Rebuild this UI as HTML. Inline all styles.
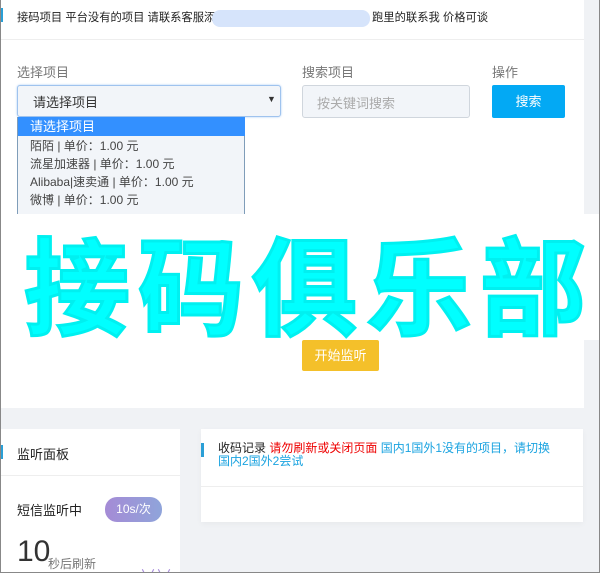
<!DOCTYPE html><html><head><meta charset="utf-8"><style>
*{margin:0;padding:0;box-sizing:border-box}
html,body{width:600px;height:573px;overflow:hidden}
body{background:#f0f2f5;font-family:"Liberation Sans","Noto Sans CJK SC",sans-serif;position:relative}
.a{position:absolute;white-space:nowrap}
.frame{position:absolute;left:0;top:0;width:600px;height:573px;border:1px solid #888;border-top:none;pointer-events:none;z-index:50}
</style></head><body>
<div class="a" style="left:0;top:0;width:584px;height:408px;background:#fff"></div>
<div class="a" style="left:0;top:8px;width:3px;height:14px;background:#2a9fd6"></div>
<div class="a" style="left:17px;top:9px;font-size:11.3px;color:#222">接码项目 平台没有的项目 请联系客服添加</div>
<div class="a" style="left:212px;top:10px;width:158px;height:17px;border-radius:8px;background:#d6e4fb"></div>
<div class="a" style="left:372px;top:9px;font-size:11.3px;color:#222">跑里的联系我 价格可谈</div>
<div class="a" style="left:0;top:39px;width:584px;height:1px;background:#eee"></div>
<div class="a" style="left:17px;top:62px;font-size:13px;color:#777">选择项目</div>
<div class="a" style="left:302px;top:62px;font-size:13px;color:#777">搜索项目</div>
<div class="a" style="left:492px;top:62px;font-size:13px;color:#777">操作</div>
<div class="a" style="left:17px;top:85px;width:264px;height:32px;background:#f2f5f9;border:1px solid #9fc3ee;border-radius:3px;box-shadow:0 0 2px #a9ccf5"></div>
<div class="a" style="left:33px;top:92px;font-size:13px;color:#333">请选择项目</div>
<div class="a" style="left:267px;top:94px;font-size:9px;color:#333">▼</div>
<div class="a" style="left:302px;top:85px;width:168px;height:33px;background:#f2f5f9;border:1px solid #d0d6dd;border-radius:3px"></div>
<div class="a" style="left:317px;top:93px;font-size:13px;color:#aaa">按关键词搜索</div>
<div class="a" style="left:492px;top:85px;width:73px;height:33px;background:#03a9f4;border-radius:2px;color:#fff;font-size:13px;text-align:center;line-height:33px">搜索</div>
<div class="a" style="left:17px;top:117px;width:228px;height:100px;background:#f2f5f9;border:1px solid #7f9db9;border-top:none"></div>
<div class="a" style="left:18px;top:117px;width:227px;height:19px;background:#3390ff"></div>
<div class="a" style="left:30px;top:118px;font-size:13px;color:#fff;line-height:18px">请选择项目</div>
<div class="a" style="left:30px;top:137px;font-size:12px;color:#444;line-height:18px">陌陌 | 单价：1.00 元<br>流星加速器 | 单价：1.00 元<br>Alibaba|速卖通 | 单价：1.00 元<br>微博 | 单价：1.00 元</div>
<div class="a" style="left:0;top:214px;width:600px;height:126px;background:#fff;overflow:hidden">
<div class="a" style="left:24px;top:-10px;font-size:106px;font-weight:bold;color:#00ffff;letter-spacing:8px;-webkit-text-stroke:3px #00f0f0;font-family:'Noto Sans CJK SC',sans-serif">接码俱乐部</div>
</div>
<div class="a" style="left:302px;top:340px;width:77px;height:31px;background:#f4c02a;border-radius:2px;color:#fff;font-size:13px;text-align:center;line-height:31px">开始监听</div>
<div class="a" style="left:0;top:429px;width:180px;height:144px;background:#fff"></div>
<div class="a" style="left:0;top:445px;width:3px;height:14px;background:#2a9fd6"></div>
<div class="a" style="left:17px;top:444px;font-size:13px;color:#222">监听面板</div>
<div class="a" style="left:0;top:475px;width:180px;height:1px;background:#eee"></div>
<div class="a" style="left:17px;top:500px;font-size:13px;color:#222">短信监听中</div>
<div class="a" style="left:105px;top:497px;width:57px;height:25px;border-radius:12px;background:linear-gradient(90deg,#a58bd6,#8fa4da);color:#fff;font-size:12px;text-align:center;line-height:25px">10s/次</div>
<div class="a" style="left:17px;top:535px;font-size:30px;color:#333;font-weight:300">10</div>
<div class="a" style="left:48px;top:555px;font-size:12px;color:#777">秒后刷新</div>
<div class="a" style="left:140px;top:562px;font-size:16px;color:#a78bdc">∨∨</div>
<div class="a" style="left:201px;top:429px;width:382px;height:93px;background:#fff;box-shadow:0 2px 6px rgba(0,0,0,.04)"></div>
<div class="a" style="left:201px;top:443px;width:3px;height:14px;background:#2a9fd6"></div>
<div class="a" style="left:218px;top:442px;font-size:12px;line-height:13px;white-space:normal;width:360px;color:#222">收码记录 <span style="color:#e00">请勿刷新或关闭页面</span> <span style="color:#1aa3e0">国内1国外1没有的项目，请切换<br>国内2国外2尝试</span></div>
<div class="a" style="left:201px;top:486px;width:382px;height:1px;background:#eee"></div>
<div class="frame"></div>
</body></html>
